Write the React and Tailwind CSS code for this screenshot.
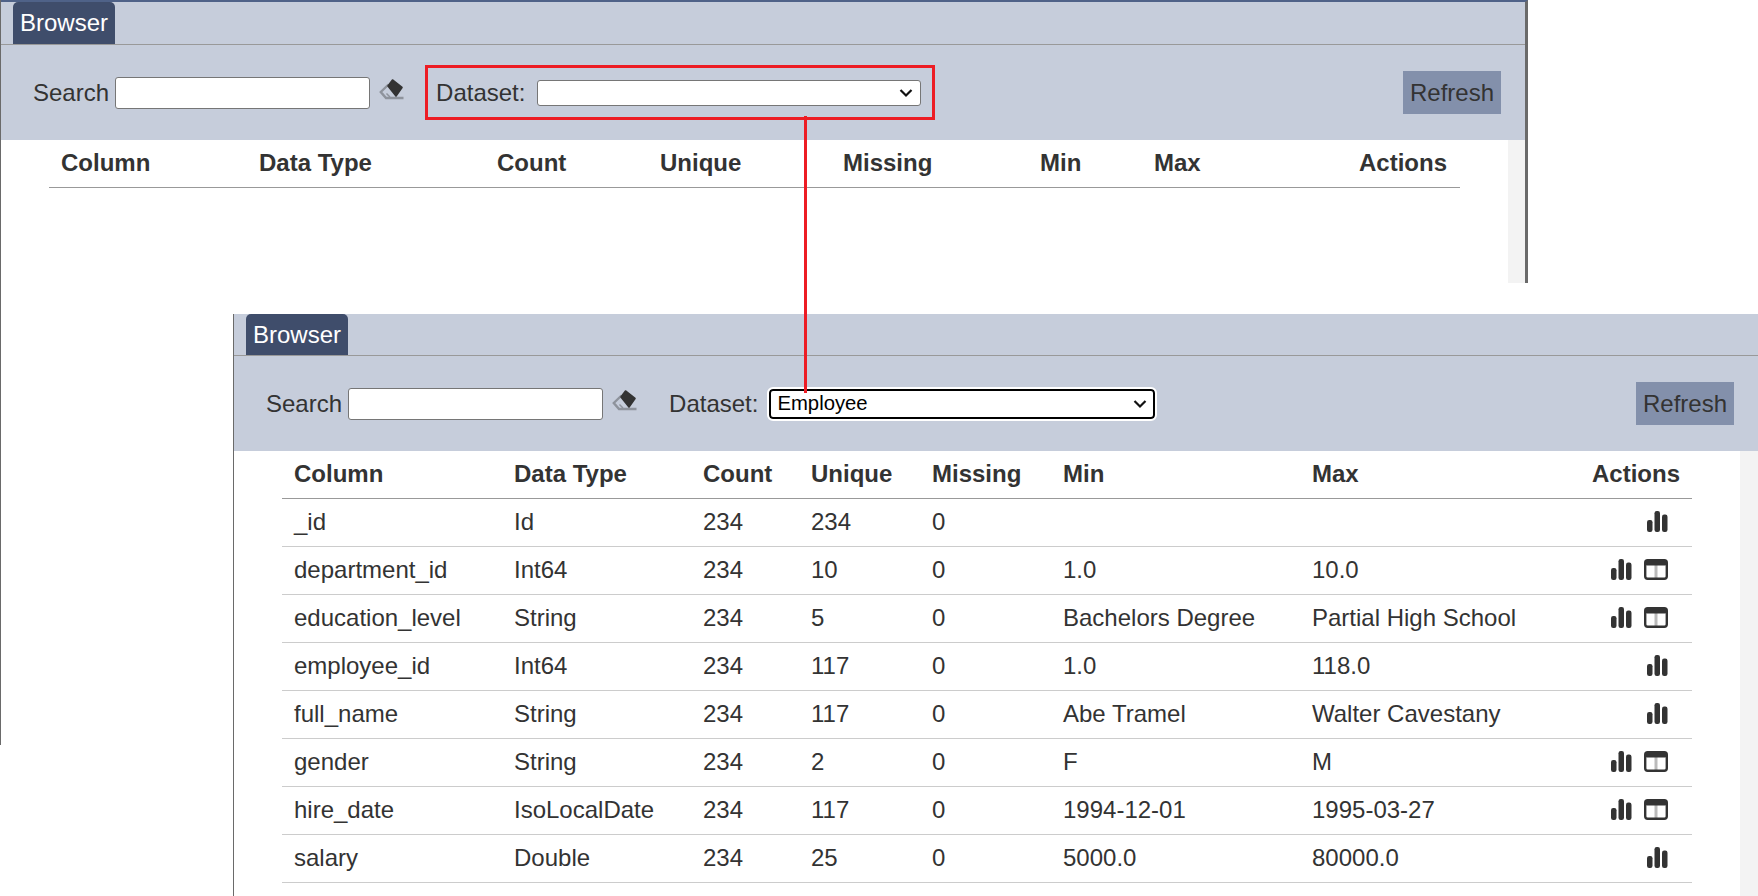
const rows = [
  ['_id', 'Id', '234', '234', '0', '', '', false],
  ['department_id', 'Int64', '234', '10', '0', '1.0', '10.0', true],
  ['education_level', 'String', '234', '5', '0', 'Bachelors Degree', 'Partial High School', true],
  ['employee_id', 'Int64', '234', '117', '0', '1.0', '118.0', false],
  ['full_name', 'String', '234', '117', '0', 'Abe Tramel', 'Walter Cavestany', false],
  ['gender', 'String', '234', '2', '0', 'F', 'M', true],
  ['hire_date', 'IsoLocalDate', '234', '117', '0', '1994-12-01', '1995-03-27', true],
  ['salary', 'Double', '234', '25', '0', '5000.0', '80000.0', false],
]

function Eraser() {
  return (
    <svg width="26" height="24" viewBox="0 0 26 24" className="shrink-0">
      <path d="M9.5 7.5 L1.8 15 L7 21 H24.5" fill="none" stroke="#8e939c" strokeWidth="2.4" />
      <path d="M7.5 16.5 L11 20" fill="none" stroke="#8e939c" strokeWidth="1.5" />
      <path d="M13.5 3 L23 10.5 L17 19 L9 9 Z" fill="#333" stroke="#333" strokeWidth="1.6" strokeLinejoin="round" />
    </svg>
  )
}

function BarsIcon() {
  return (
    <svg width="21" height="21" viewBox="0 0 21 21" fill="#333">
      <rect x="0" y="9" width="5.5" height="12" rx="2.2" />
      <rect x="7.5" y="0" width="5.5" height="21" rx="2.2" />
      <rect x="15" y="3.5" width="5.5" height="17.5" rx="2.2" />
    </svg>
  )
}

function TableIcon() {
  return (
    <svg width="24" height="21" viewBox="0 0 24 21" fill="none">
      <path d="M12 6 V19" stroke="#bbb" strokeWidth="3" />
      <rect x="1.2" y="1.2" width="21.6" height="18.6" rx="2.5" stroke="#333" strokeWidth="2.4" />
      <rect x="1" y="1" width="22" height="5.5" rx="2" fill="#333" />
    </svg>
  )
}

function Toolbar({ selected }) {
  return (
    <div className="flex h-[95px] items-center bg-[#c6cddb] pr-[24px] text-[24px] text-[#333]">
      <span className="ml-[32px]">Search</span>
      <input className="ml-[6px] h-[32px] w-[255px] rounded-[3px] border border-[#767676] bg-white" />
      <span className="mb-[7px] ml-[9px]"><Eraser /></span>
      <label className="ml-[31px] flex items-center">
        <span>Dataset:</span>
        <span className={selected ? 'relative ml-[11px]' : 'relative ml-[12px]'}>
          <select
            defaultValue={selected}
            className={selected
              ? 'block h-[30px] w-[386px] appearance-none rounded-[4px] border-2 border-black bg-white pb-[2px] pl-[6px] text-[20.3px] leading-[24px] text-black outline-2 outline-white'
              : 'block h-[26px] w-[384px] appearance-none rounded-[3px] border border-[#767676] bg-white pl-[6px] text-[20.3px] text-black'}
          >
            <option value=""></option>
            <option value="Employee">Employee</option>
          </select>
          <svg width="14" height="9" viewBox="0 0 14 9" fill="none" stroke="#111" strokeWidth="2.2" className="pointer-events-none absolute right-[8px] top-1/2 -translate-y-1/2">
            <path d="M1.5 1.5 L7 7 L12.5 1.5" />
          </svg>
        </span>
      </label>
      <button className="ml-auto h-[43px] w-[98px] bg-[#8390ab] text-center text-[#333]">Refresh</button>
    </div>
  )
}

function Tab({ height }) {
  return (
    <div className={`flex items-end border-b border-[#999] bg-[#c6cddb] pl-[12px] ${height}`}>
      <div className="flex h-full w-[102px] items-center justify-center rounded-t-[5px] bg-[#3f4d6b] text-[24px] text-white">Browser</div>
    </div>
  )
}

function TopWindow() {
  return (
    <div className="absolute left-0 top-0 flex h-[283px] w-[1528px] flex-col border-r-[3px] border-t-2 border-l border-[#6a6a6a] border-t-[#4f6288] bg-white">
      <Tab height="h-[43px]" />
      <Toolbar selected="" />
      <div className="flex min-h-0 flex-1">
        <div className="flex-1 pl-[48px] pr-[48px]">
          <div className="flex h-[48px] items-center border-b border-[#999] pb-[2px] text-[24px] font-bold text-[#333]">
            <span className="ml-[12px] w-[198px]">Column</span>
            <span className="w-[238px]">Data Type</span>
            <span className="w-[163px]">Count</span>
            <span className="w-[183px]">Unique</span>
            <span className="w-[197px]">Missing</span>
            <span className="w-[114px]">Min</span>
            <span>Max</span>
            <span className="ml-auto mr-[13px]">Actions</span>
          </div>
        </div>
        <div className="w-[17px] bg-[#f3f3f3]" />
      </div>
    </div>
  )
}

function BottomWindow() {
  return (
    <div className="absolute bottom-0 left-[233px] right-0 top-[314px] flex flex-col border-l border-[#6a6a6a] bg-white">
      <Tab height="h-[42px]" />
      <Toolbar selected="Employee" />
      <div className="flex min-h-0 flex-1">
        <div className="flex-1 pl-[48px] pr-[48px]">
          <table className="w-[1410px] table-fixed border-collapse text-[24px] text-[#333]">
            <colgroup>
              <col className="w-[220px]" />
              <col className="w-[188px]" />
              <col className="w-[108px]" />
              <col className="w-[122px]" />
              <col className="w-[130px]" />
              <col className="w-[250px]" />
              <col className="w-[250px]" />
              <col />
            </colgroup>
            <thead>
              <tr className="h-[47px] border-b border-[#999] font-bold">
                <th className="pl-[12px] text-left">Column</th>
                <th className="pl-[12px] text-left">Data Type</th>
                <th className="pl-[13px] text-left">Count</th>
                <th className="pl-[13px] text-left">Unique</th>
                <th className="pl-[12px] text-left">Missing</th>
                <th className="pl-[13px] text-left">Min</th>
                <th className="pl-[12px] text-left">Max</th>
                <th className="pr-[12px] text-right">Actions</th>
              </tr>
            </thead>
            <tbody>
              {rows.map((r) => (
                <tr key={r[0]} className="h-[48px] border-b border-[#ccc]">
                  <td className="pl-[12px]">{r[0]}</td>
                  <td className="pl-[12px]">{r[1]}</td>
                  <td className="pl-[13px]">{r[2]}</td>
                  <td className="pl-[13px]">{r[3]}</td>
                  <td className="pl-[12px]">{r[4]}</td>
                  <td className="pl-[13px]">{r[5]}</td>
                  <td className="pl-[12px]">{r[6]}</td>
                  <td className="pr-[24px]">
                    <div className="flex items-center justify-end gap-[12px] pb-[2px]">
                      <BarsIcon />
                      {r[7] && <TableIcon />}
                    </div>
                  </td>
                </tr>
              ))}
            </tbody>
          </table>
        </div>
        <div className="w-[18px] bg-[#f3f3f3]" />
      </div>
    </div>
  )
}

export default function App() {
  return (
    <div className="relative h-[896px] w-[1758px] overflow-hidden bg-white font-['Liberation_Sans',Arial,sans-serif]">
      <TopWindow />
      {/* left edge of the first window keeps running past the cut */}
      <div className="absolute left-0 top-0 h-[745px] w-px bg-[#6a6a6a]" />
      <BottomWindow />
      {/* callout drawn over the screenshots */}
      <div className="pointer-events-none absolute left-[425px] top-[65px] h-[55px] w-[510px] border-[3px] border-[#ed1c24]" />
      <div className="pointer-events-none absolute left-[804px] top-[116px] h-[277px] w-[3px] bg-[#ed1c24]" />
    </div>
  )
}
